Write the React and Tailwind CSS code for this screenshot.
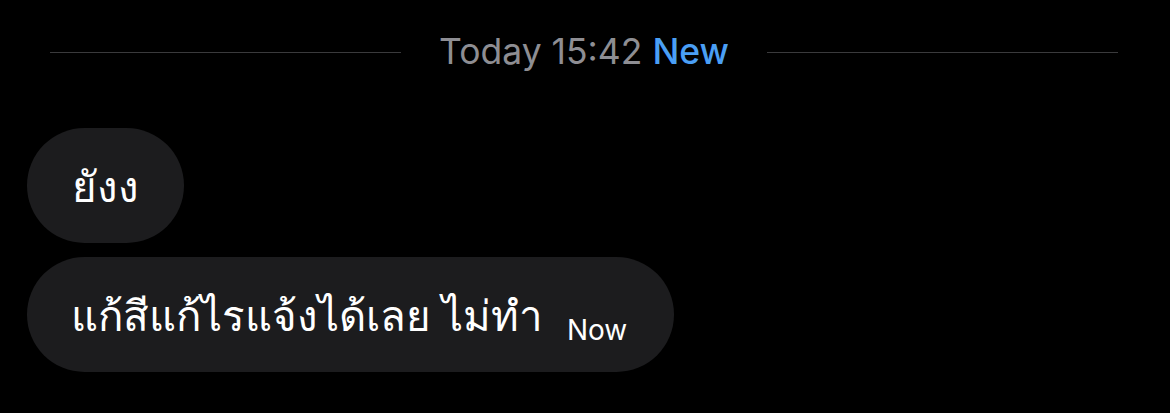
export default function App() {
  return (
    <div className="w-[1170px] h-[413px] bg-black overflow-hidden" style={{ fontFamily: '"Noto Sans", "Liberation Sans", sans-serif' }}>
      {/* Date separator */}
      <div className="flex items-center pl-[50px] pr-[52px] pt-[30px] h-[44px] box-content">
        <div className="flex-1 h-px bg-[#3a3a3c]" />
        <div className="px-[38px] text-[35.5px] leading-none text-[#8e8e93] whitespace-nowrap" style={{ fontFamily: 'Inter, "Liberation Sans", sans-serif' }}>
          Today 15:42 <span className="text-[#4a9ff5] font-medium">New</span>
        </div>
        <div className="flex-1 h-px bg-[#3a3a3c]" />
      </div>

      {/* Messages */}
      <div className="flex flex-col items-start gap-[14px] pl-[27px] pt-[54px]">
        <div className="h-[115px] rounded-full bg-[#1c1c1e] px-[45px] flex items-center text-white text-[42px]">
          ยังง
        </div>
        <div className="h-[115px] rounded-full bg-[#1c1c1e] pl-[44px] pr-[47px] flex items-center text-white text-[42px]">
          <span>แก้สีแก้ไรแจ้งได้เลย ไม่ทำ</span>
          <span className="ml-[24px] mt-[30px] text-[28px] text-white" style={{ fontFamily: 'Inter, "Liberation Sans", sans-serif' }}>Now</span>
        </div>
      </div>
    </div>
  );
}
